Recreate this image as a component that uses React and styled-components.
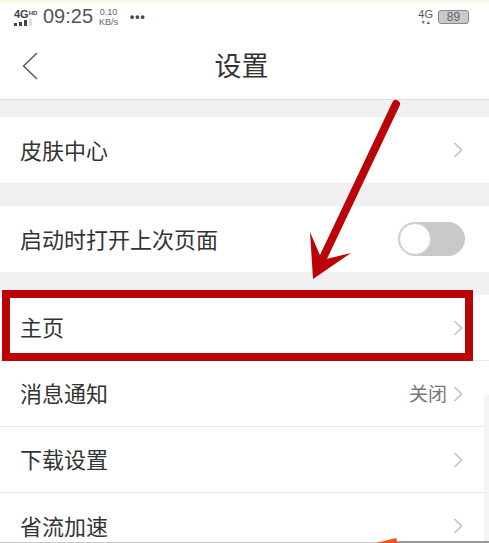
import React from 'react'
import styled, {createGlobalStyle} from 'styled-components'

const GlobalStyle = createGlobalStyle`
  html, body {
    margin: 0;
    padding: 0;
    background: #fff;
  }
  body {
    font-family: "Liberation Sans", "Noto Sans CJK SC", sans-serif;
  }
`

const Root = styled.div`
  position: relative;
  width: 489px;
  height: 543px;
  overflow: hidden;
  background: #fff;
`

const TopStrip = styled.div`
  height: 3px;
  background: #f6f8e8;
`

const StatusBar = styled.div`
  display: flex;
  align-items: center;
  height: 27px;
  padding: 0 20px 0 14px;
  color: #555;
`

const Signal = styled.div`
  display: flex;
  flex-direction: column;
  width: 24px;
  margin-right: 5px;
  font-size: 11px;
  font-weight: 700;
  line-height: 10px;
  white-space: nowrap;
  color: #444;
`

const Hd = styled.span`
  font-size: 6px;
  vertical-align: 3px;
`

const Bars = styled.div`
  display: flex;
  align-items: flex-end;
  gap: 2px;
  height: 7px;
`

const Bar = styled.i`
  display: block;
  width: 3px;
  height: ${props => props.$h}px;
  background: ${props => props.$off ? '#ddd' : '#444'};
`

const Time = styled.span`
  font-size: 20px;
  color: #555;
`

const Speed = styled.div`
  display: flex;
  flex-direction: column;
  align-items: center;
  margin-left: 6px;
  font-size: 9px;
  line-height: 10px;
  color: #666;
`

const Dots = styled.span`
  margin-left: 12px;
  font-size: 12px;
  font-weight: 700;
  letter-spacing: 1px;
  line-height: 14px;
  color: #444;
`

const StatusRight = styled.div`
  display: flex;
  align-items: center;
  margin-left: auto;
`

const Net = styled.div`
  display: flex;
  flex-direction: column;
  align-items: center;
  margin-right: 5px;
  font-size: 11px;
  line-height: 10px;
  color: #555;
`

const Arrows = styled.span`
  font-size: 5px;
  line-height: 6px;
`

const Battery = styled.div`
  position: relative;
  width: 29px;
  height: 12px;
  border: 1px solid #888;
  border-radius: 3px;
  background: #c9c9c9;
  font-size: 12px;
  line-height: 12px;
  text-align: center;
  color: #666;
  :after {
    content: "";
    position: absolute;
    right: -3px;
    top: 4px;
    width: 2px;
    height: 5px;
    background: #777;
  }
`

const Header = styled.header`
  position: relative;
  display: flex;
  align-items: center;
  justify-content: center;
  height: 69px;
  padding-right: 6px;
  box-sizing: content-box;
  border-bottom: 1px solid #dedede;
  font-size: 27px;
  color: #333;
`

const BackIcon = styled.svg`
  position: absolute;
  left: 22px;
  top: 22px;
`

const Gap = styled.div`
  height: ${props => props.$h}px;
  background: #f0f0f0;
`

const Row = styled.div`
  display: flex;
  align-items: center;
  height: ${props => props.$h || 66}px;
  padding: 0 26px 0 20px;
  background: #fff;
  border-bottom: ${props => props.$line ? '1px solid #e8e8e8' : 'none'};
  box-sizing: border-box;
  font-size: 22px;
  color: #333;
`

const Label = styled.span`
  flex: 1;
  margin-top: -3px;
`

const Value = styled.span`
  margin-right: 6px;
  margin-top: -2px;
  font-size: 19px;
  color: #777;
`

const Switch = styled.div`
  position: relative;
  width: 67px;
  height: 34px;
  margin-right: -2px;
  border-radius: 17px;
  background: #c9c9c9;
`

const Knob = styled.div`
  position: absolute;
  left: 1px;
  top: 1px;
  width: 30px;
  height: 30px;
  border: 1px solid #d4d4d4;
  border-radius: 50%;
  background: #fff;
`

const Overlay = styled.svg`
  position: absolute;
  left: 0;
  top: 0;
  pointer-events: none;
`

const Highlight = styled.div`
  position: absolute;
  left: 2px;
  top: 290px;
  width: 471px;
  height: 71px;
  box-sizing: border-box;
  border: 8px solid #bb0408;
`

const ScrollEdge = styled.div`
  position: absolute;
  right: 0;
  top: 395px;
  bottom: 0;
  width: 5px;
  background: #f4f4f4;
`

const BottomLine = styled.div`
  position: absolute;
  left: ${props => props.$left}px;
  right: 0;
  bottom: 0;
  height: ${props => props.$h}px;
  background: ${props => props.$color};
`

const Chevron = () => (
  <svg width="10" height="16" viewBox="0 0 10 16" fill="none">
    <path d="M1.5 1L8.5 8L1.5 15" stroke="#c4c4c4" strokeWidth="1.6" />
  </svg>
)

const App = () => (
  <Root>
    <GlobalStyle />
    <TopStrip />
    <StatusBar>
      <Signal>
        <span>4G<Hd>HD</Hd></span>
        <Bars>
          <Bar $h={3} />
          <Bar $h={4} />
          <Bar $h={6} />
          <Bar $h={7} $off />
        </Bars>
      </Signal>
      <Time>09:25</Time>
      <Speed>
        <span>0.10</span>
        <span>KB/s</span>
      </Speed>
      <Dots>•••</Dots>
      <StatusRight>
        <Net>
          <span>4G</span>
          <Arrows>▼▲</Arrows>
        </Net>
        <Battery>89</Battery>
      </StatusRight>
    </StatusBar>
    <Header>
      <BackIcon width="16" height="28" viewBox="0 0 16 28" fill="none">
        <path d="M15 1L1.5 14L15 27" stroke="#555" strokeWidth="1.4" />
      </BackIcon>
      设置
    </Header>
    <Gap $h={17} />
    <Row>
      <Label>皮肤中心</Label>
      <Chevron />
    </Row>
    <Gap $h={23} />
    <Row>
      <Label>启动时打开上次页面</Label>
      <Switch><Knob /></Switch>
    </Row>
    <Gap $h={23} />
    <Row $line>
      <Label>主页</Label>
      <Chevron />
    </Row>
    <Row $line>
      <Label>消息通知</Label>
      <Value>关闭</Value>
      <Chevron />
    </Row>
    <Row $line>
      <Label>下载设置</Label>
      <Chevron />
    </Row>
    <Row>
      <Label>省流加速</Label>
      <Chevron />
    </Row>
    <ScrollEdge />
    <BottomLine $left={0} $h={1} $color="#c8c8c8" />
    <BottomLine $left={398} $h={2} $color="#999" />
    <Highlight />
    <Overlay width="489" height="543" viewBox="0 0 489 543">
      <path d="M396 104L323 258" stroke="#bb0408" strokeWidth="8" strokeLinecap="round" fill="none" />
      <path d="M310 232L313 279L351 253L322 260Z" fill="#bb0408" />
      <path d="M376 543L396 538L398 543Z" fill="#f4511e" />
    </Overlay>
  </Root>
)

export default App
